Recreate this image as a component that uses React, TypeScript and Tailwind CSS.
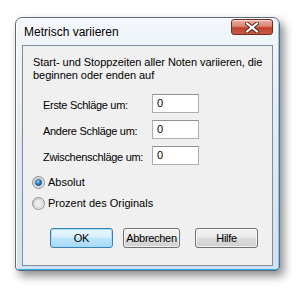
import React from 'react';

const font = { fontFamily: '"Liberation Sans", Arial, sans-serif' };

function CloseButton() {
  return (
    <div className="mr-[6px] mt-px flex h-[16px] w-[42px] items-center justify-center rounded-[3px] border border-[#6e2b22] bg-[linear-gradient(to_bottom,#eab3a6_0%,#d98472_45%,#c0432f_55%,#c85a45_100%)] shadow-[inset_0_1px_0_rgba(255,255,255,0.5)]">
      <svg width="14" height="11" viewBox="0 0 14 11">
        <path d="M2 1.5 L12 9.5 M12 1.5 L2 9.5" stroke="#5a2a22" strokeWidth="4" strokeLinecap="round" />
        <path d="M2 1.5 L12 9.5 M12 1.5 L2 9.5" stroke="#ffffff" strokeWidth="2.2" strokeLinecap="round" />
      </svg>
    </div>
  );
}

function Radio({ checked }: { checked?: boolean }) {
  return (
    <svg width="13" height="13" viewBox="0 0 13 13">
      <defs>
        <linearGradient id="rb" x1="0" y1="0" x2="1" y2="1">
          <stop offset="0" stopColor="#cfcfcf" />
          <stop offset="1" stopColor="#f8f8f8" />
        </linearGradient>
        <radialGradient id="rd" cx="0.4" cy="0.35" r="0.7">
          <stop offset="0" stopColor="#9fd6ff" />
          <stop offset="0.5" stopColor="#2a84cf" />
          <stop offset="1" stopColor="#0d4d8a" />
        </radialGradient>
      </defs>
      <circle cx="6.5" cy="6.5" r="6" fill="url(#rb)" stroke="#8e9196" strokeWidth="1" />
      <circle cx="6.5" cy="6.5" r="4.3" fill="#ececec" stroke="#c4c4c4" strokeWidth="0.6" />
      {checked && <circle cx="6.5" cy="6.5" r="3.2" fill="url(#rd)" stroke="#1b4f80" strokeWidth="0.5" />}
    </svg>
  );
}

function Field({ label }: { label: string }) {
  return (
    <div className="flex h-[19px] items-center">
      <span className="mt-[3px] w-[109px] tracking-[-0.3px]">{label}</span>
      <div className="flex h-[19px] w-[47px] items-center border border-[#abadb3] border-t-[#8e9298] bg-white pl-[4px]">0</div>
    </div>
  );
}

function Button({ label, primary, w }: { label: string; primary?: boolean; w: string }) {
  return (
    <div
      className={
        primary
          ? `flex h-[20px] ${w} items-center justify-center rounded-[3px] border border-[#3c7fb1] bg-[linear-gradient(to_bottom,#eaf6fd_0%,#d9f0fc_45%,#bee6fd_50%,#a7d9f5_100%)] tracking-[-0.3px] shadow-[inset_0_0_0_1px_rgba(160,220,250,0.9)]`
          : `flex h-[20px] ${w} items-center justify-center rounded-[3px] border border-[#707070] bg-[linear-gradient(to_bottom,#f2f2f2_0%,#ebebeb_45%,#dddddd_50%,#cfcfcf_100%)] tracking-[-0.3px] shadow-[inset_0_0_0_1px_rgba(255,255,255,0.7)]`
      }
    >
      {label}
    </div>
  );
}

export default function App() {
  return (
    <div className="h-[292px] w-[304px] bg-white pl-[15px] pt-[17px] text-[11px] leading-[13px] text-black" style={font}>
      <div className="flex h-[254px] w-[265px] flex-col rounded-t-[7px] rounded-b-[4px] border border-[#5c6a78] bg-[linear-gradient(to_bottom,#f3f7fb_0%,#e2ecf6_40%,#cfe1f3_100%)] shadow-[4px_5px_10px_rgba(0,0,0,0.45),inset_0_1px_0_#ffffff,inset_1px_0_0_#ffffff,inset_0_-1px_0_#35a8e8,inset_-1px_0_0_#8cc8ee]">
        {/* title bar */}
        <div className="flex h-[27px] shrink-0 items-start justify-between">
          <span className="ml-[8px] mt-[7px] text-[12px] leading-[14px] [text-shadow:0_0_6px_#ffffff]">Metrisch variieren</span>
          <CloseButton />
        </div>

        {/* client area */}
        <div className="mx-[6px] mb-[4px] flex flex-1 flex-col border border-[#7f8c99] bg-[#f0f0f0] pl-[10px] pt-[10px]">
          <p className="w-[235px] tracking-[-0.05px]">Start- und Stoppzeiten aller Noten variieren, die beginnen oder enden auf</p>

          <div className="ml-[10px] mt-[12px] flex flex-col gap-[7px]">
            <Field label="Erste Schläge um:" />
            <Field label="Andere Schläge um:" />
            <Field label="Zwischenschläge um:" />
          </div>

          <div className="-ml-px mt-[11px] flex flex-col gap-[8px]">
            <label className="flex h-[13px] items-center gap-[3px]">
              <Radio checked />
              <span>Absolut</span>
            </label>
            <label className="flex h-[13px] items-center gap-[3px]">
              <Radio />
              <span>Prozent des Originals</span>
            </label>
          </div>

          <div className="ml-[17px] mt-[18px] flex gap-[10px]">
            <Button label="OK" primary w="w-[63px]" />
            <Button label="Abbrechen" w="w-[57px]" />
            <div className="ml-[5px]">
              <Button label="Hilfe" w="w-[63px]" />
            </div>
          </div>
        </div>
      </div>
    </div>
  );
}
